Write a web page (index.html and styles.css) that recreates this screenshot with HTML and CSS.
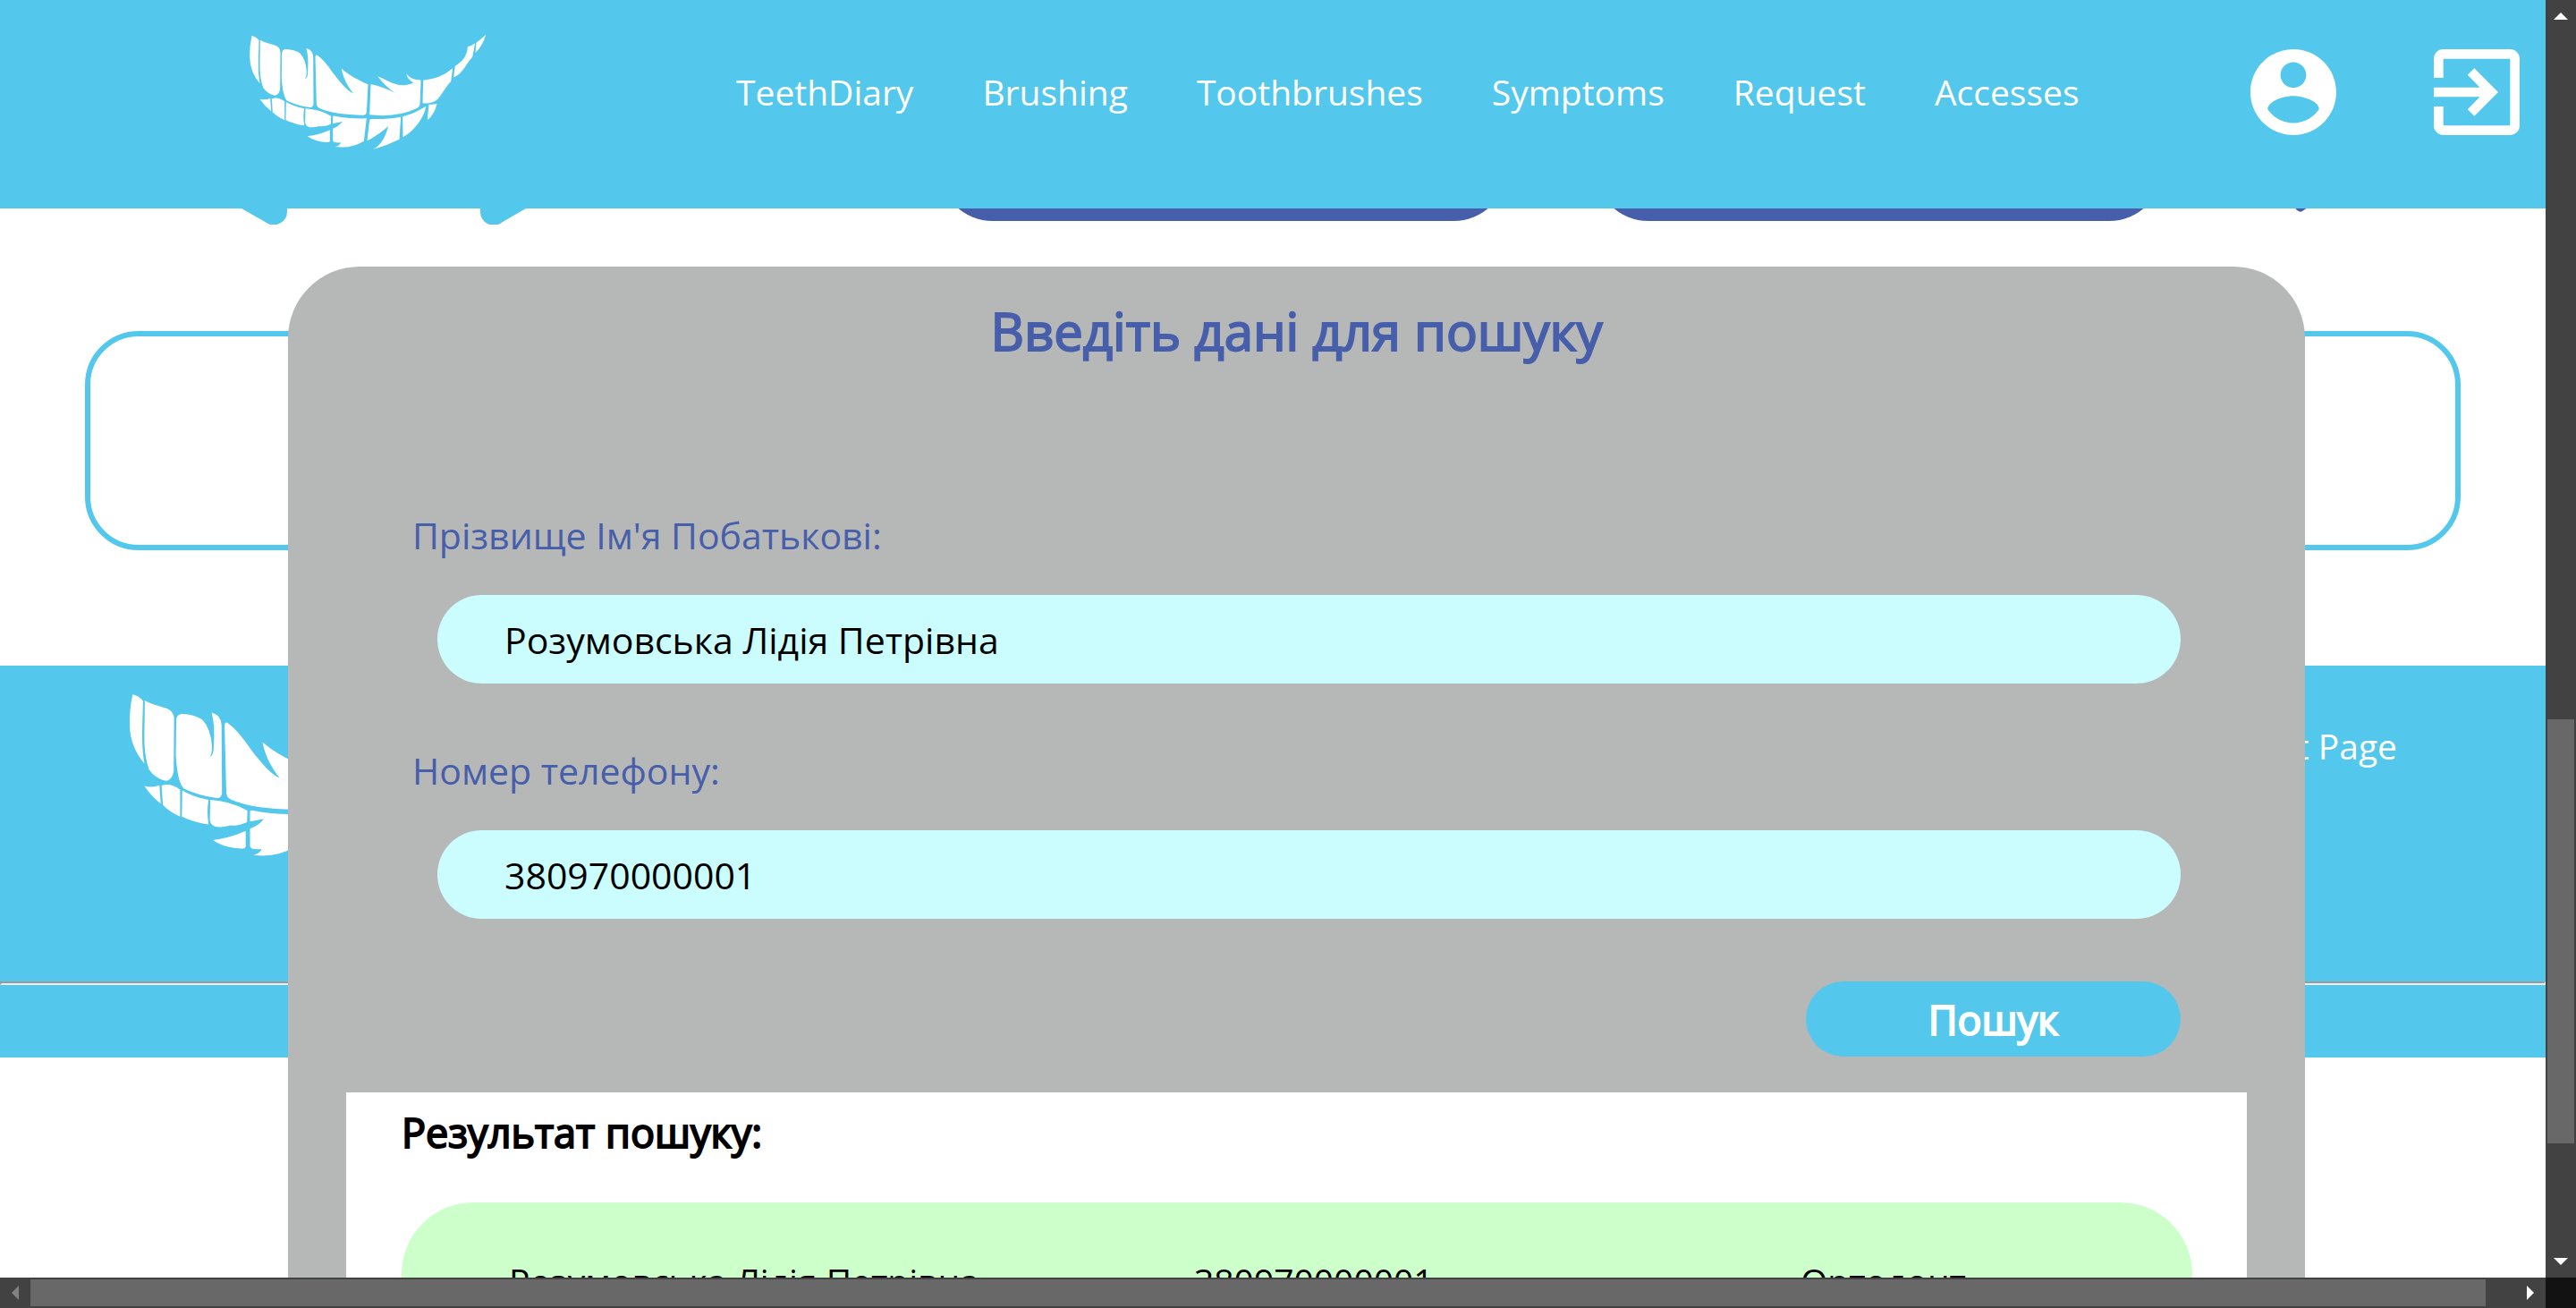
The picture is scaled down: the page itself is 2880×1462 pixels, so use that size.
FILE: index.html
```html
<!DOCTYPE html>
<html lang="uk">
<head>
  <meta charset="utf-8">
  <title>TeethDiary</title>
  <link rel="stylesheet" href="styles.css">
</head>
<body>
  <svg class="sprite" aria-hidden="true">
    <symbol id="feather" viewBox="80 50 800 396">
      <path d="M93 59Q108 62 117 74Q116 110 115 150Q115 190 120 219Q87 180 86 130Q85 95 93 59Z"/>
      <path d="M121 73C140 83 160 87 174 92Q188 98 189 115L188 238Q183 259 169 259Q146 254 131 233Q119 200 120 150Q121 110 121 73Z"/>
      <path d="M194 118Q195 104 208 104Q235 105 254 117Q274 137 277 180Q277 195 272 203Q281 200 281 178Q284 130 276 101Q299 107 299 130L300 288Q298 300 288 299Q245 293 212 277Q197 265 193 200Z"/>
      <path d="M306 130Q307 120 315 126C345 148 361 182 388 212Q416 246 434 252C417 232 399 200 394 169C420 192 452 208 483 222L478 317Q477 324 468 325Q375 325 322 303Q310 298 310 285Z"/>
      <path d="M492 221Q535 231 572 250Q540 228 515 195C545 206 565 224 600 225Q622 224 636 216Q616 208 611 186C626 205 641 206 660 208L657 288Q656 298 645 303Q580 334 488 324Z"/>
      <path d="M668 208Q725 204 767 168L761 212C740 234 731 256 716 272Q698 288 666 285Z"/>
      <path d="M775 160Q815 138 817 96Q830 93 842 84L833 130C812 152 798 190 770 198Z"/>
      <path d="M846 82Q862 70 878 55Q868 92 843 116Z"/>
      <path d="M120 271Q136 276 155 269L158 312Q137 296 120 271Z"/>
      <path d="M160 270Q180 262 203 279L203 342Q178 331 163 315Z"/>
      <path d="M208 281Q233 296 269 303Q264 330 269 360Q236 356 207 342Z"/>
      <path d="M273 303Q320 306 359 328L358 355Q335 365 320 362Q298 368 285 365Q273 361 272 350Z"/>
      <path d="M365 331Q364 326 372 328Q420 338 478 336L469 412Q426 438 373 431Q389 427 392 417Q365 419 365 410L365 370Q386 362 397 347L365 353Z"/>
      <path d="M279 396Q320 391 355 375L355 412Q354 417 345 416Q307 415 279 396Z"/>
      <path d="M488 342Q489 338 497 338Q550 339 593 331L588 406Q544 428 497 441Q536 423 551 361C536 376 510 395 480 411Z"/>
      <path d="M599 330Q642 318 677 295C672 332 640 376 600 399Z"/>
      <path d="M687 289Q703 290 714 287Q706 322 682 342Z"/>
    </symbol>
  </svg>

  <div class="screen">
    <header class="topbar">
      <a class="topbar-logo" href="#" aria-label="TeethDiary"><svg><use href="#feather"/></svg></a>
      <nav class="topnav">
        <a href="#">TeethDiary</a>
        <a href="#">Brushing</a>
        <a href="#">Toothbrushes</a>
        <a href="#">Symptoms</a>
        <a href="#">Request</a>
        <a href="#">Accesses</a>
      </nav>
      <div class="account">
        <a href="#" aria-label="Profile">
          <svg viewBox="2 2 20 20"><path d="M12 2C6.480 2 2 6.480 2 12s4.480 10 10 10 10-4.480 10-10S17.520 2 12 2zm0 3c1.660 0 3 1.340 3 3s-1.340 3-3 3-3-1.340-3-3 1.340-3 3-3zm0 14.200c-2.500 0-4.710-1.280-6-3.220.030-1.990 4-3.080 6-3.080 1.990 0 5.970 1.090 6 3.080-1.290 1.940-3.500 3.220-6 3.220z"/></svg>
        </a>
        <a href="#" aria-label="Log out">
          <svg viewBox="3 3 18 18"><path d="M10.090 15.590L11.500 17l5-5-5-5-1.410 1.410L12.670 11H3v2h9.670l-2.580 2.590zM19 3H5c-1.110 0-2 .9-2 2v4h2V5h14v14H5v-4H3v4c0 1.100.89 2 2 2h14c1.100 0 2-.9 2-2V5c0-1.100-.9-2-2-2z"/></svg>
        </a>
      </div>
    </header>

    <main>
      <div class="actions">
        <svg class="brackets" viewBox="0 0 320 60"><path d="M0 42L28 58A15 15 0 0 0 51 45V0H0ZM318 42L292 57A15 15 0 0 1 267 45V0H318Z"/></svg>
        <button class="action" type="button" aria-label="Request"></button>
        <button class="action" type="button" aria-label="Search"></button>
        <svg class="marker" viewBox="0 0 16 20"><path d="M0 0H16V15L10 19Q7 21 3 17L1 13Z"/></svg>
      </div>
      <div class="record"></div>
    </main>

    <footer class="footer">
      <div class="footer-main">
        <svg class="footer-logo"><use href="#feather"/></svg>
        <a class="footer-link" href="#">Contact Page</a>
      </div>
      <hr>
    </footer>

    <section class="dialog" role="dialog" aria-labelledby="dialog-title">
      <h1 class="dialog-title" id="dialog-title">Введіть дані для пошуку</h1>
      <form class="search">
        <div class="field">
          <label for="name">Прізвище Ім'я Побатькові:</label>
          <input id="name" type="text" value="Розумовська Лідія Петрівна">
        </div>
        <div class="field">
          <label for="phone">Номер телефону:</label>
          <input id="phone" type="text" value="380970000001">
        </div>
        <button class="submit" type="button">Пошук</button>
      </form>
      <div class="results">
        <h2>Результат пошуку:</h2>
        <ul>
          <li class="result">
            <span>Розумовська Лідія Петрівна</span>
            <span>380970000001</span>
            <span>Ортодонт</span>
          </li>
        </ul>
      </div>
    </section>
  </div>

  <div class="bar bar-y" aria-hidden="true">
    <svg class="arrow" viewBox="0 0 34 34"><path d="M9 22H25L17 14Z"/></svg>
    <div class="track"><div class="thumb"></div></div>
    <svg class="arrow" viewBox="0 0 34 34"><path d="M9 12H25L17 20Z"/></svg>
  </div>
  <div class="bar bar-x" aria-hidden="true">
    <svg class="arrow arrow-off" viewBox="0 0 34 34"><path d="M21 9V25L13 17Z"/></svg>
    <div class="track"><div class="thumb"></div></div>
    <svg class="arrow" viewBox="0 0 34 34"><path d="M13 9V25L21 17Z"/></svg>
  </div>
  <div class="corner"></div>
</body>
</html>
```
FILE: styles.css
```css
:root {
  --sky: #53c8ec;
  --indigo: #475eab;
  --bar: #424242;
}

* { box-sizing: border-box; }

body {
  margin: 0;
  height: 100vh;
  display: grid;
  grid-template-columns: minmax(0, 1fr) 34px;
  grid-template-rows: minmax(0, 1fr) 34px;
  overflow: hidden;
  background: #fff;
  color: #000;
  font: 39px/54px "Open Sans", sans-serif;
}

a { color: #fff; text-decoration: none; }
svg { display: block; fill: #fff; }
.sprite { position: absolute; width: 0; height: 0; }

.screen { position: relative; overflow: hidden; }

/* Header */
.topbar {
  position: relative;
  z-index: 1;
  display: flex;
  align-items: center;
  padding: 37px 29px 64px 277px;
  background: var(--sky);
}
.topbar-logo svg { width: 267px; height: 132px; }
.topnav { display: flex; gap: 77px; margin-left: 279px; }
.account { display: flex; gap: 109px; margin-left: auto; }
.account svg { width: 96px; height: 96px; }

/* Page under the dialog */
.actions {
  display: flex;
  align-items: flex-end;
  margin-top: -110px;
  height: 128px;
  padding: 0 266px 0 270px;
}
.brackets { width: 320px; height: 60px; fill: var(--sky); }
.action {
  width: 635px;
  height: 120px;
  margin: 0 98px 4px 0;
  border: 0;
  border-radius: 60px;
  background: var(--indigo);
}
.brackets + .action { margin-left: 460px; }
.marker { width: 16px; height: 20px; margin: 0 0 14px auto; fill: var(--indigo); }
.record {
  height: 245px;
  margin: 119px 95px 129px;
  border: 6px solid var(--sky);
  border-radius: 60px;
}

/* Footer */
.footer { padding-bottom: 81px; background: var(--sky); }
.footer-main {
  display: flex;
  justify-content: space-between;
  align-items: flex-start;
  padding: 28px 166px 134px 142px;
}
.footer-logo { width: 386px; height: 191px; }
.footer-link { margin-top: 35px; }
.footer hr {
  margin: 0;
  border: 2px solid;
  border-color: #9a9a9a #eee #eee #9a9a9a;
}

/* Search dialog */
.dialog {
  position: absolute;
  z-index: 2;
  top: 298px;
  left: 322px;
  right: 269px;
  padding: 31px 65px 65px;
  border-radius: 80px;
  background: #b6b8b7;
}
.dialog-title, .results h2, .submit {
  font-weight: 400;
  -webkit-text-stroke: 2px currentColor;
}
.dialog-title {
  margin: 0;
  color: var(--indigo);
  font-size: 58px;
  line-height: 82px;
  text-align: center;
}
.search {
  display: flex;
  flex-direction: column;
  gap: 70px;
  margin-top: 160px;
  padding: 0 74px 40px;
}
.field { display: flex; flex-direction: column; gap: 40px; }
.field label { color: var(--indigo); font-size: 41px; }
.field input {
  height: 99px;
  margin-left: 28px;
  padding: 0 75px;
  border: 0;
  border-radius: 50px;
  background: #cbfdfe;
  color: #000;
  font: inherit;
  font-size: 41px;
}
.submit {
  align-self: flex-end;
  width: 419px;
  height: 84px;
  padding: 0;
  border: 0;
  border-radius: 42px;
  background: var(--sky);
  color: #fff;
  font-family: inherit;
  font-size: 45px;
}
.results { padding: 12px 61px 62px 62px; background: #fff; }
.results h2 { margin: 0 0 46px; font-size: 45px; line-height: 65px; }
.results ul { margin: 0; padding: 0; list-style: none; }
.result {
  display: grid;
  grid-template-columns: 383fr 339fr 159fr;
  padding: 61px 120px;
  border-radius: 80px;
  background: #cdffcb;
}

/* Window scroll bars */
.bar { display: flex; background: var(--bar); }
.bar-y { flex-direction: column; padding: 0 2px; }
.bar-x { padding: 2px 0; }
.arrow { flex: none; width: 34px; height: 34px; align-self: center; }
.arrow-off { fill: #828282; }
.track { flex: 1; display: flex; }
.thumb { background: #686868; }
.bar-y .track { flex-direction: column; justify-content: flex-end; padding-bottom: 116px; }
.bar-y .thumb { height: 474px; }
.bar-x .track { padding-right: 33px; }
.bar-x .thumb { width: 100%; }
.corner { background: #121212; }
```
